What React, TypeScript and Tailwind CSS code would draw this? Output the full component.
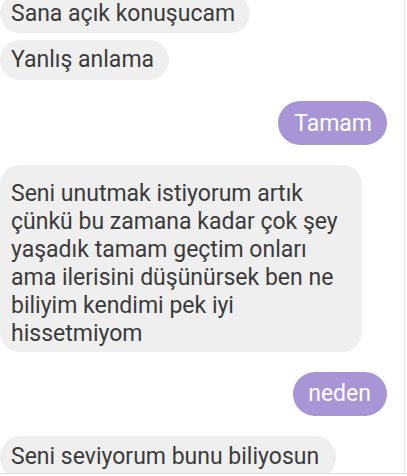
import React from "react";

const font = { fontFamily: "Roboto, 'Noto Sans', sans-serif" };

function Left({ children, className = "" }: { children: React.ReactNode; className?: string }) {
  return (
    <div className={"self-start bg-[#efefef] text-[#3b3b3b] text-[23px] leading-[28px] whitespace-nowrap " + className}>
      {children}
    </div>
  );
}

function Right({ children, className = "" }: { children: React.ReactNode; className?: string }) {
  return (
    <div className={"self-end bg-[#a795d6] text-white text-[23px] leading-[28px] whitespace-nowrap " + className}>
      {children}
    </div>
  );
}

export default function App() {
  return (
    <div className="w-[407px] h-[476px] overflow-hidden bg-white flex flex-col" style={font}>
      <div className="flex flex-1 min-h-0">
        <div className="flex-1 flex flex-col overflow-hidden">
          <Left className="mt-[-6px] rounded-[21px] pl-[11px] pr-[15px] pt-[6px] pb-[5px]">Sana açık konuşucam</Left>
          <Left className="mt-[7px] rounded-[20px] pl-[11px] pr-[15px] pt-[6px] pb-[6px]">Yanlış anlama</Left>
          <Right className="mt-[21px] mr-[17px] rounded-[22px] pl-[16px] pr-[15px] pt-[9px] pb-[7px]">Tamam</Right>
          <Left className="mt-[20px] w-[362px] rounded-[20px] pl-[11px] pr-3 pt-[15px] pb-[4px]">
            Seni unutmak istiyorum artık
            <br />
            çünkü bu zamana kadar çok şey
            <br />
            yaşadık tamam geçtim onları
            <br />
            ama ilerisini düşünürsek ben ne
            <br />
            biliyim kendimi pek iyi
            <br />
            hissetmiyom
          </Left>
          <Right className="mt-[20px] mr-[17px] rounded-[22px] pl-[15px] pr-[16px] pt-[8px] pb-[8px]">neden</Right>
          <Left className="mt-[20px] rounded-[21px] pl-[11px] pr-[17px] pt-[7px] pb-[8px]">Seni seviyorum bunu biliyosun</Left>
        </div>
        <div className="w-px bg-[#e4e4e4]" />
        <div className="w-[2px]" />
      </div>
      <div className="h-px bg-[#dedede]" />
      <div className="h-[2px]" />
    </div>
  );
}
